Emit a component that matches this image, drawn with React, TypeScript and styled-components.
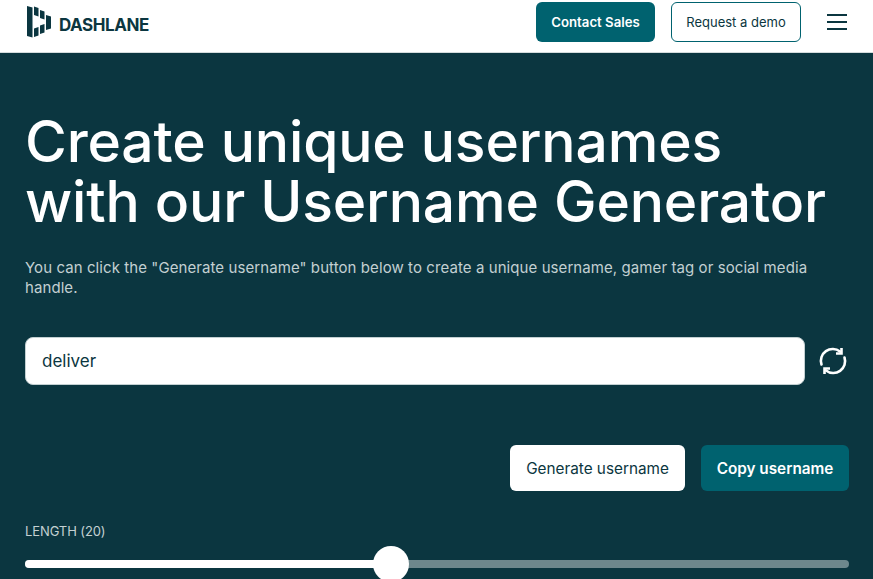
import styled, { createGlobalStyle } from 'styled-components'

const GlobalStyle = createGlobalStyle`
  html, body {
    margin: 0;
    padding: 0;
    height: 579px;
    overflow: hidden;
    background: #0b3640;
    font-family: Inter, 'Noto Sans', sans-serif;
  }
  * {
    box-sizing: border-box;
  }
`

const Logo = () => (
  <LogoWrap>
    <svg width="24" height="32" viewBox="0 0 24 32" fill="#0b3640">
      <path d="M0 0L5.5 1.5V31.5L0 30Z" />
      <path d="M7 0.5L11.5 2V10.5L7 9Z" />
      <path d="M7 22.5L11.5 21V29.5L7 31Z" />
      <path d="M13 4L17.5 5.5V13.5L13 12Z" />
      <path d="M13 19.5L17.5 18V26.5L13 28Z" />
      <path d="M19 9L24 10.5V22.5L19 24Z" />
    </svg>
    <LogoText>DASHLANE</LogoText>
  </LogoWrap>
)

const RefreshIcon = () => (
  <svg width="30" height="30" viewBox="0 0 30 30" fill="none" stroke="#fff" strokeWidth="2.6">
    <path d="M3.5 18.5A11.8 11.8 0 0 1 22 5.5" strokeLinecap="round" />
    <path d="M26.5 11.5A11.8 11.8 0 0 1 8 24.5" strokeLinecap="round" />
    <path d="M23.5 2V7.5H18" />
    <path d="M6.5 28V22.5H12" />
  </svg>
)

const App = () => {
  const sliderPercent = 44.2

  return (
    <>
      <GlobalStyle />
      <Header>
        <Logo />
        <HeaderActions>
          <ContactButton>Contact Sales</ContactButton>
          <DemoButton>Request a demo</DemoButton>
          <Burger aria-label="Menu">
            <span />
            <span />
            <span />
          </Burger>
        </HeaderActions>
      </Header>
      <Main>
        <Title>
          Create unique usernames
          <br />
          with our Username Generator
        </Title>
        <Intro>
          You can click the "Generate username" button below to create a unique username, gamer tag or social media
          handle.
        </Intro>
        <InputRow>
          <UsernameField>deliver</UsernameField>
          <RefreshButton aria-label="Refresh">
            <RefreshIcon />
          </RefreshButton>
        </InputRow>
        <Actions>
          <ActionButton $variant="light" $width={175}>
            Generate username
          </ActionButton>
          <ActionButton $variant="teal" $width={148}>
            Copy username
          </ActionButton>
        </Actions>
        <SliderLabel>LENGTH (20)</SliderLabel>
        <SliderTrack>
          <SliderFill style={{ width: `${sliderPercent}%` }} />
          <SliderThumb />
        </SliderTrack>
      </Main>
    </>
  )
}

const Header = styled.header`
  height: 53px;
  background: #fff;
  border-bottom: 1px solid #d5dcdd;
  display: flex;
  align-items: center;
  justify-content: space-between;
  padding: 0 26px 8px 27px;
`

const LogoWrap = styled.div`
  display: flex;
  align-items: center;
  gap: 8px;
`

const LogoText = styled.span`
  font-family: Inter, sans-serif;
  font-weight: 700;
  font-size: 17px;
  line-height: 20px;
  letter-spacing: -0.45px;
  color: #0b3640;
  margin-top: 6px;
`

const HeaderActions = styled.div`
  display: flex;
  align-items: center;
`

const ContactButton = styled.button`
  width: 119px;
  height: 40px;
  border: none;
  border-radius: 6px;
  background: #00626f;
  color: #fff;
  font: 600 13.2px Inter, sans-serif;
  margin-right: 16px;
  padding: 0 0 1px;
`

const DemoButton = styled.button`
  width: 130px;
  height: 40px;
  border: 1px solid #00626f;
  border-radius: 6px;
  background: #fff;
  color: #0b3640;
  font: 400 13px Inter, sans-serif;
  margin-right: 26px;
  padding: 0 0 1px;
`

const Burger = styled.button`
  width: 20px;
  height: 16px;
  border: none;
  background: none;
  padding: 0;
  display: flex;
  flex-direction: column;
  justify-content: space-between;

  span {
    display: block;
    height: 2px;
    background: #0b3640;
  }
`

const Main = styled.main`
  background: #0b3640;
  height: 526px;
  padding: 59px 24px 0 25px;
`

const Title = styled.h1`
  margin: 0;
  font-family: Inter, sans-serif;
  font-weight: 500;
  font-size: 57px;
  line-height: 60px;
  letter-spacing: -0.15px;
  color: #fff;
  white-space: nowrap;
`

const Intro = styled.p`
  margin: 26px 0 0;
  font-size: 15px;
  line-height: 20px;
  letter-spacing: 0.08px;
  color: #c3d0d2;
`

const InputRow = styled.div`
  display: flex;
  align-items: center;
  margin-top: 39px;
  gap: 13px;
`

const UsernameField = styled.div`
  flex: 1;
  height: 48px;
  background: #fff;
  border: 1px solid #c3d0d2;
  border-radius: 8px;
  padding: 0 16px;
  display: flex;
  align-items: center;
  font-size: 17px;
  color: #0b3640;
`

const RefreshButton = styled.button`
  width: 30px;
  height: 30px;
  padding: 0;
  border: none;
  background: none;
  margin-right: 1px;
`

const Actions = styled.div`
  display: flex;
  justify-content: flex-end;
  gap: 16px;
  margin-top: 60px;
`

const ActionButton = styled.button<{ $variant: 'light' | 'teal'; $width: number }>`
  width: ${({ $width }) => $width}px;
  height: 46px;
  padding: 0;
  border: none;
  border-radius: 6px;
  background: ${({ $variant }) => ($variant === 'light' ? '#fff' : '#00626f')};
  color: ${({ $variant }) => ($variant === 'light' ? '#0b3640' : '#fff')};
  font: ${({ $variant }) => ($variant === 'light' ? 400 : 600)} 15.3px Inter, sans-serif;
`

const SliderLabel = styled.div`
  margin-top: 32px;
  font-size: 13px;
  line-height: 17px;
  letter-spacing: -0.1px;
  color: #c3d0d2;
`

const SliderTrack = styled.div`
  position: relative;
  height: 8px;
  margin-top: 20px;
  border-radius: 4px;
  background: #6d878c;
`

const SliderFill = styled.div`
  height: 100%;
  background: #fff;
  border-radius: 4px;
`

const SliderThumb = styled.div`
  position: absolute;
  left: 348px;
  top: -14px;
  width: 36px;
  height: 36px;
  border-radius: 50%;
  background: #fff;
`

export default App
